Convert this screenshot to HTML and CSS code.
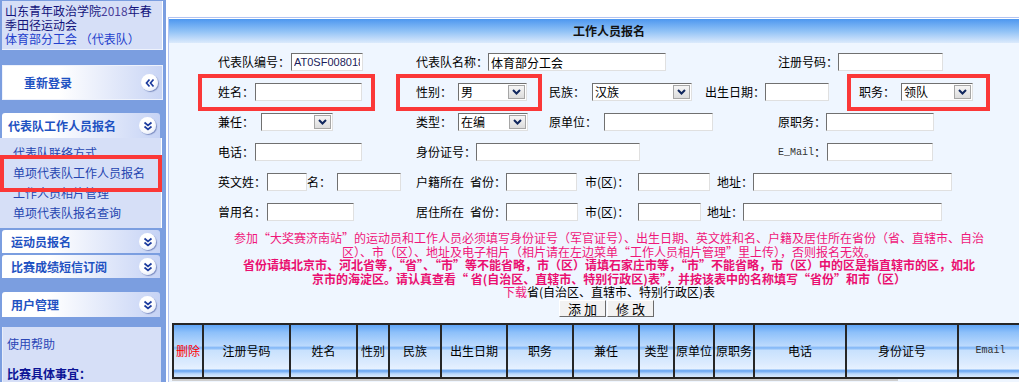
FILE: index.html
```html
<!DOCTYPE html>
<html lang="zh-CN">
<head>
    <meta charset="UTF-8">
    <title>工作人员报名</title>
    <link rel="stylesheet" href="styles.css">
</head>
<body>
    <div class="page">
        <div class="side">
            <div class="info">
                山东青年政治学院<span class="yr">2018</span>年春<br>季田径运动会<br>
                <span class="team">体育部分工会 （代表队）</span>
            </div>
            <div class="relogin">
                <span>重新登录</span>
                <i class="knob"><svg width="16" height="16" viewBox="0 0 16 16"><polyline points="7.5,4.5 4.5,8 7.5,11.5"/><polyline points="11.5,4.5 8.5,8 11.5,11.5"/></svg></i>
            </div>
            <div class="grp first">
                <span>代表队工作人员报名</span>
                <i class="knob"><svg width="16" height="16" viewBox="0 0 16 16"><polyline points="4.5,4.5 8,7.5 11.5,4.5"/><polyline points="4.5,8.5 8,11.5 11.5,8.5"/></svg></i>
            </div>
            <ul class="menu">
                <li>代表队联络方式</li>
                <li>单项代表队工作人员报名</li>
                <li>工作人员相片管理</li>
                <li>单项代表队报名查询</li>
            </ul>
            <div class="grp small">
                <span>运动员报名</span>
                <i class="knob"><svg width="16" height="16" viewBox="0 0 16 16"><polyline points="4.5,4.5 8,7.5 11.5,4.5"/><polyline points="4.5,8.5 8,11.5 11.5,8.5"/></svg></i>
            </div>
            <div class="grp small">
                <span>比赛成绩短信订阅</span>
                <i class="knob"><svg width="16" height="16" viewBox="0 0 16 16"><polyline points="4.5,4.5 8,7.5 11.5,4.5"/><polyline points="4.5,8.5 8,11.5 11.5,8.5"/></svg></i>
            </div>
            <div class="grp apart">
                <span>用户管理</span>
                <i class="knob"><svg width="16" height="16" viewBox="0 0 16 16"><polyline points="4.5,4.5 8,7.5 11.5,4.5"/><polyline points="4.5,8.5 8,11.5 11.5,8.5"/></svg></i>
            </div>
            <div class="help">
                <p>使用帮助</p>
                <p class="note">比赛具体事宜：</p>
            </div>
        </div>

        <div class="main">
            <div class="panel">
                <div class="title">工作人员报名</div>
                <div class="form">
                    <div class="fields">
                        <div class="row">
                            <div class="cell c198"><span>代表队编号：</span><input class="ml1 w72 code" value="AT0SF0080180018"></div>
                            <div class="cell c362"><span>代表队名称：</span><input class="w178" value="体育部分工会"></div>
                            <div class="cell"><span>注册号码：</span><input class="w105"></div>
                        </div>
                        <div class="row">
                            <div class="cell c198"><span>姓名：</span><input class="ml1 w107"></div>
                            <div class="cell c133"><span>性别：</span><div class="sel ml6 w69"><span>男</span><i class="drop"><svg width="11" height="8" viewBox="0 0 11 8"><polyline points="2,2 5.5,5.5 9,2"/></svg></i></div></div>
                            <div class="cell c156"><span>民族：</span><div class="sel ml7 w100"><span>汉族</span><i class="drop"><svg width="11" height="8" viewBox="0 0 11 8"><polyline points="2,2 5.5,5.5 9,2"/></svg></i></div></div>
                            <div class="cell c154"><span>出生日期：</span><input class="w64"></div>
                            <div class="cell"><span>职务：</span><div class="sel ml6 w72"><span>领队</span><i class="drop"><svg width="11" height="8" viewBox="0 0 11 8"><polyline points="2,2 5.5,5.5 9,2"/></svg></i></div></div>
                        </div>
                        <div class="row">
                            <div class="cell c198"><span>兼任：</span><div class="sel ml7 w72"><span></span><i class="drop"><svg width="11" height="8" viewBox="0 0 11 8"><polyline points="2,2 5.5,5.5 9,2"/></svg></i></div></div>
                            <div class="cell c133"><span>类型：</span><div class="sel ml6 w70"><span>在编</span><i class="drop"><svg width="11" height="8" viewBox="0 0 11 8"><polyline points="2,2 5.5,5.5 9,2"/></svg></i></div></div>
                            <div class="cell c229"><span>原单位：</span><input class="ml7 w109"></div>
                            <div class="cell"><span>原职务：</span><input class="w108"></div>
                        </div>
                        <div class="row">
                            <div class="cell c198"><span>电话：</span><input class="ml1 w107"></div>
                            <div class="cell c362"><span>身份证号：</span><input class="w164"></div>
                            <div class="cell"><span class="mono">E_Mail</span><span>：</span><input class="ml1 w106"></div>
                        </div>
                        <div class="row">
                            <div class="cell c198"><span>英文姓：</span><input class="ml1 w40"><span>名：</span><input class="ml6 w64"></div>
                            <div class="cell">
                                <span>户籍所在</span><span class="ml6">省份：</span><input class="w71">
                                <span class="city ml8">市(区)：</span><input class="w72">
                                <span class="ml7">地址：</span><input class="w199">
                            </div>
                        </div>
                        <div class="row">
                            <div class="cell c198"><span>曾用名：</span><input class="ml1 w87"></div>
                            <div class="cell">
                                <span>居住所在</span><span class="ml6">省份：</span><input class="w72">
                                <span class="city ml7">市(区)：</span><input class="w63">
                                <span class="ml6">地址：</span><input class="w199">
                            </div>
                        </div>
                    </div>

                    <div class="notice">
                        <p>参加“大奖赛济南站”的运动员和工作人员必须填写身份证号（军官证号）、出生日期、英文姓和名、户籍及居住所在省份（省、直辖市、自治</p>
                        <p>区）、市（区）、地址及电子相片（相片请在左边菜单“工作人员相片管理”里上传），否则报名无效。</p>
                        <p class="strong">省份请填北京市、河北省等，“省”、“市”等不能省略，市（区）请填石家庄市等，“市”不能省略，市（区）中的区是指直辖市的区，如北</p>
                        <p class="strong">京市的海淀区。请认真查看“ 省(自治区、直辖市、特别行政区)表”，并按该表中的名称填写“省份”和市（区）</p>
                        <p>下载<span class="plain">省(自治区、直辖市、特别行政区)表</span></p>
                    </div>

                    <div class="btns">
                        <button>添 加</button><button>修 改</button>
                    </div>

                    <table class="grid">
                        <colgroup>
                            <col style="width: 30px"><col style="width: 87px"><col style="width: 67px"><col style="width: 32px">
                            <col style="width: 52px"><col style="width: 66px"><col style="width: 66px"><col style="width: 66px">
                            <col style="width: 35px"><col style="width: 40px"><col style="width: 40px"><col style="width: 92px">
                            <col style="width: 112px"><col style="width: 65px">
                        </colgroup>
                        <tr>
                            <th class="del">删除</th>
                            <th>注册号码</th>
                            <th>姓名</th>
                            <th>性别</th>
                            <th>民族</th>
                            <th>出生日期</th>
                            <th>职务</th>
                            <th>兼任</th>
                            <th>类型</th>
                            <th>原单位</th>
                            <th>原职务</th>
                            <th>电话</th>
                            <th>身份证号</th>
                            <th class="mono">Email</th>
                        </tr>
                    </table>
                    <div class="hbar"></div>
                </div>
            </div>
        </div>
    </div>

    <div class="mark m-side"></div>
    <div class="mark m-name"></div>
    <div class="mark m-sex"></div>
    <div class="mark m-duty"></div>
</body>
</html>
```

FILE: styles.css
```css
* {
    margin: 0;
    padding: 0;
    box-sizing: border-box;
}

html, body {
    overflow: hidden;
}

body {
    position: relative;
    width: 1019px;
    height: 382px;
    font: 12px/1 "Noto Sans CJK SC", sans-serif;
    color: #000;
    background: #fff;
}

.page {
    display: flex;
    height: 382px;
}

/* ---------- left menu ---------- */

.side {
    flex: 0 0 166px;
    padding-top: 1px;
    background: #7b9ee0;
}

.info {
    margin: 0 3px 0 2px;
    height: 49px;
    padding: 3px 0 0 3px;
    line-height: 14px;
    color: #14147c;
    background: #d6dff7;
    border-right: 1px solid #fff;
    border-bottom: 1px solid #eef2fc;
}

.info .yr {
    color: #4a3f9a;
}

.info .team {
    color: #2340cc;
}

.relogin {
    display: flex;
    align-items: center;
    justify-content: space-between;
    margin: 15px 3px 0 2px;
    height: 35px;
    padding: 0 4px 0 21px;
    font-size: 12px;
    font-weight: bold;
    color: #1f52c2;
    background: linear-gradient(to right, #fff 35%, #c9d5f5);
    border: 1px solid #eef2fc;
}

.knob {
    display: flex;
    align-items: center;
    justify-content: center;
    width: 17px;
    height: 17px;
    border-radius: 50%;
    background: radial-gradient(circle at 40% 35%, #fff 45%, #d9e1f4 100%);
    box-shadow: 1px 1px 1px rgba(60, 80, 150, .55);
}

.knob svg polyline {
    fill: none;
    stroke: #1c3b9e;
    stroke-width: 1.7;
}

.grp {
    display: flex;
    align-items: center;
    justify-content: space-between;
    margin: 2px 6px 0 2px;
    height: 23px;
    padding: 0 4px 0 6px;
    font-weight: bold;
    color: #1f52c2;
    background: linear-gradient(to right, #fff 30%, #c6d3f5);
    border-radius: 3px 3px 0 0;
}

.grp.first {
    margin-top: 13px;
    height: 25px;
    padding-left: 6px;
}

.grp.small {
    padding-left: 9px;
}

.grp.apart {
    margin-top: 14px;
    height: 25px;
    padding-left: 9px;
}

.menu {
    list-style: none;
    margin-right: 4px;
    height: 90px;
    padding: 5px 0 0 13px;
    line-height: 20px;
    color: #2545b0;
    background: #d6dff7;
    border-right: 1px solid #fff;
}

.help {
    margin: 10px 5px 0 2px;
    height: 60px;
    padding: 10px 0 0 4px;
    color: #2a46b6;
    background: #d6dff7;
    border-left: 1px solid #e8edfa;
}

.help p {
    line-height: 14px;
}

.help .note {
    margin-top: 16px;
    font-weight: bold;
    color: #0c1496;
}

/* ---------- main panel ---------- */

.main {
    flex: 1;
    min-width: 0;
    padding: 17px 0 0 2px;
}

.panel {
    width: 882px;
    height: 365px;
    background: #fff;
    border: 1px solid #b3c3f1;
    border-bottom: none;
}

.title {
    margin-top: 1px;
    height: 24px;
    line-height: 24px;
    text-align: center;
    font-weight: bold;
    color: #111;
    background: linear-gradient(#4d97f0, #8fc1f6 50%, #dceafc);
}

.form {
    height: 340px;
    padding-top: 10px;
    background: #eff6ff;
}

.fields {
    display: flex;
    flex-direction: column;
    gap: 12px;
    padding-left: 49px;
}

.row {
    display: flex;
    align-items: center;
    height: 18px;
}

.cell {
    display: flex;
    align-items: center;
    flex: none;
    white-space: nowrap;
}

.c198 { width: 198px; }
.c362 { width: 362px; }
.c133 { width: 133px; }
.c156 { width: 156px; }
.c154 { width: 154px; }
.c229 { width: 229px; }

.ml1 { margin-left: 1px; }
.ml6 { margin-left: 6px; }
.ml7 { margin-left: 7px; }
.ml8 { margin-left: 8px; }

.w40 { width: 40px; }
.w63 { width: 63px; }
.w64 { width: 64px; }
.w69 { width: 69px; }
.w70 { width: 70px; }
.w71 { width: 71px; }
.w72 { width: 72px; }
.w87 { width: 87px; }
.w100 { width: 100px; }
.w105 { width: 105px; }
.w106 { width: 106px; }
.w107 { width: 107px; }
.w108 { width: 108px; }
.w109 { width: 109px; }
.w164 { width: 164px; }
.w178 { width: 178px; }
.w199 { width: 199px; }

.city {
    width: 53px;
}

.mono {
    font: 10px "Liberation Mono", monospace;
    color: #333;
}

input {
    height: 18px;
    padding: 0 2px;
    font: 12px "Noto Sans CJK SC", sans-serif;
    color: #000;
    background: #fff;
    border: 1px solid;
    border-color: #707070 #e0e0e0 #e0e0e0 #707070;
    outline: none;
}

input.code {
    font: 11px "Liberation Sans", sans-serif;
    color: #1c1c5a;
}

.sel {
    display: flex;
    align-items: center;
    justify-content: space-between;
    flex: none;
    height: 18px;
    padding: 0 1px 0 2px;
    background: #fff;
    border: 1px solid;
    border-color: #707070 #e0e0e0 #e0e0e0 #707070;
}

.drop {
    display: flex;
    align-items: center;
    justify-content: center;
    width: 17px;
    height: 14px;
    background: linear-gradient(#f6f6f6, #dcdcdc);
    border: 1px solid #a6a6a6;
}

.drop polyline {
    fill: none;
    stroke: #10275e;
    stroke-width: 2;
}

.notice {
    margin-top: 10px;
    text-align: center;
    color: #f0177a;
}

.notice p {
    line-height: 13.5px;
    white-space: nowrap;
}

.notice .strong {
    font-weight: bold;
    color: #ea0f70;
}

.notice .plain {
    color: #000;
}

.btns {
    display: flex;
    justify-content: center;
    gap: 1px;
    margin: 1px 5px 0 0;
}

.btns button {
    width: 47px;
    height: 17px;
    font: 13px/15px "Noto Sans CJK SC", sans-serif;
    color: #000;
    background: #f2f2f2;
    border: 1px solid;
    border-color: #fff #6a6a6a #6a6a6a #fff;
}

.grid {
    margin: 6px 0 0 3px;
    width: 850px;
    table-layout: fixed;
    border-collapse: collapse;
    border: 2px solid #262626;
}

.grid th {
    height: 54px;
    padding: 0;
    font-weight: normal;
    white-space: nowrap;
    overflow: hidden;
    border: 2px solid #262626;
    background: linear-gradient(#5fa4f5 0%, #8dc0fa 14%, #bcdafd 40%, #7db4f6 44%, #c8e1fd 49%, #dcebfe 74%, #e6f1ff 84%, #64a3f2 88%, #bcd9fc 94%, #d8eaff 100%);
}

.grid .del {
    color: #f00;
}

.hbar {
    margin-left: 3px;
    width: 726px;
    height: 2px;
    background: #cfcfcf;
}

/* ---------- red highlight boxes ---------- */

.mark {
    position: absolute;
    border: 4px solid #fb3838;
}

.m-side {
    left: 0;
    top: 155px;
    width: 162px;
    height: 37px;
}

.m-name {
    left: 198px;
    top: 74px;
    width: 177px;
    height: 37px;
}

.m-sex {
    left: 396px;
    top: 74px;
    width: 146px;
    height: 37px;
}

.m-duty {
    left: 847px;
    top: 74px;
    width: 143px;
    height: 37px;
}
```
